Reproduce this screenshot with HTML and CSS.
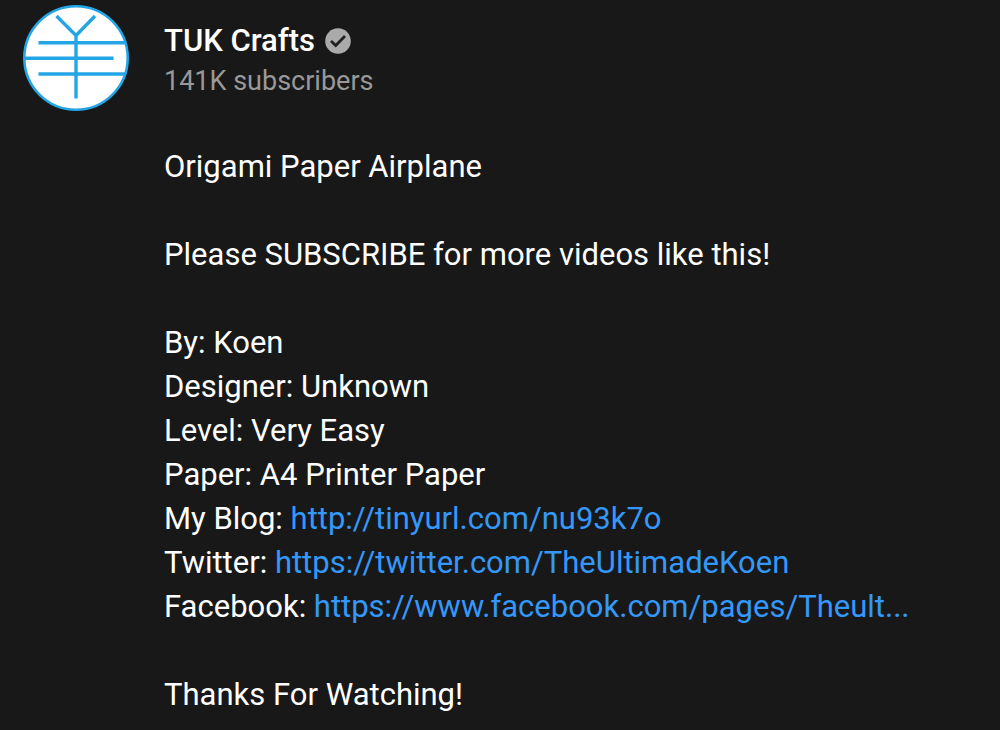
FILE: index.html
```html
<!DOCTYPE html>
<html lang="en">
<head>
<meta charset="utf-8">
<title>TUK Crafts</title>
<link rel="stylesheet" href="styles.css">
</head>
<body>
<main class="card">
  <svg class="avatar" viewBox="0 0 108 108" aria-hidden="true">
    <circle cx="54" cy="54" r="51.700" fill="#fff" stroke="#24a5e6" stroke-width="2.600"/>
    <path d="M34.500 12 54 31.500 73 12M54 31V94.500M16.500 38.700H103M3 54.200H91.500M16.500 70H103" fill="none" stroke="#24a5e6" stroke-width="3.400"/>
  </svg>
  <div class="content">
    <header class="channel">
      <h1 class="name">TUK Crafts
        <svg class="badge" viewBox="0 0 26 26" role="img" aria-label="Verified"><circle cx="13" cy="13" r="12.800" fill="#aaa"/><path d="M6 13 10.700 17.500 20 8" fill="none" stroke="#202020" stroke-width="2.800"/></svg>
      </h1>
      <p class="subscribers">141K subscribers</p>
    </header>
    <div class="description">
      <p>Origami Paper Airplane</p>
      <p>Please SUBSCRIBE for more videos like this!</p>
      <p>By: Koen<br>Designer: Unknown<br>Level: Very Easy<br>Paper: A4 Printer Paper<br>My Blog: <a href="http://tinyurl.com/nu93k7o">http://tinyurl.com/nu93k7o</a><br>Twitter: <a href="https://twitter.com/TheUltimadeKoen">https://twitter.com/TheUltimadeKoen</a><br>Facebook: <a href="#">https://www.facebook.com/pages/Theult...</a></p>
      <p>Thanks For Watching!</p>
    </div>
  </div>
</main>
</body>
</html>
```
FILE: styles.css
```css
body {
  margin: 0;
  background: #181818;
  color: #fff;
  font-family: Roboto, "Liberation Sans", sans-serif;
}
.card {
  display: flex;
  gap: 34px;
  padding: 4px 22px 8px;
}
.avatar {
  flex: none;
  width: 108px;
  height: 108px;
}
.content {
  flex: 1;
  padding-top: 17px;
}
.name {
  display: flex;
  align-items: center;
  gap: 10px;
  margin: 0;
  font-size: 31px;
  font-weight: 500;
  line-height: 40px;
}
.badge {
  width: 26px;
  height: 26px;
}
.subscribers {
  margin: 0 0 44px;
  color: #999;
  font-size: 27px;
  line-height: 40px;
}
.description {
  display: flex;
  flex-direction: column;
  gap: 44px;
  font-size: 31px;
  line-height: 44px;
}
.description p {
  margin: 0;
}
.description a {
  color: #3498fb;
  text-decoration: none;
}
```
